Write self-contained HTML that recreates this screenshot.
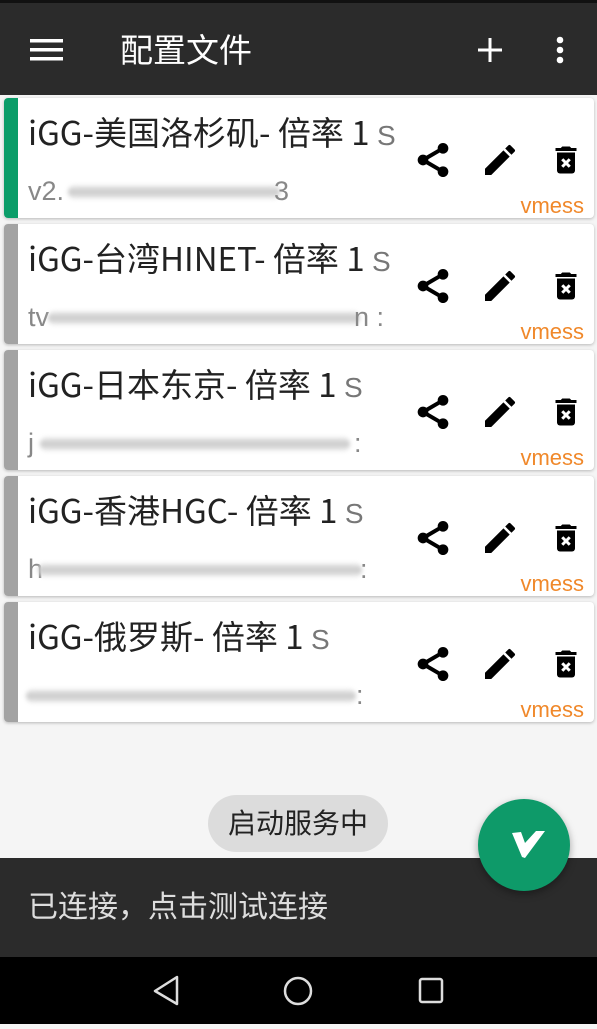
<!DOCTYPE html>
<html><head><meta charset="utf-8"><style>
*{margin:0;padding:0;box-sizing:border-box}
body{width:597px;height:1024px;background:#f5f5f5;position:relative;overflow:hidden;font-family:"Liberation Sans","Noto Sans CJK SC",sans-serif}
.top{position:absolute;left:0;top:0;width:597px;height:95px;background:#2b2b2b;border-top:3px solid #111}
.title{position:absolute;left:120px;top:29px;color:#fff;font-size:33px;line-height:38px}
.card{position:absolute;left:4px;width:590px;height:120px;background:#fff;border-radius:4px;box-shadow:0 1px 3px rgba(0,0,0,.25);overflow:hidden}
.bar{position:absolute;left:0;top:0;width:14px;height:100%;background:#a3a3a3}
.name{position:absolute;left:24px;top:13px;font-size:33px;line-height:40px;color:#222;white-space:nowrap;font-family:"Noto Sans CJK SC","Liberation Sans",sans-serif}
.name span{color:#777;font-size:28px;font-family:"Liberation Sans",sans-serif}
.addr{position:absolute;left:24px;top:77px;font-size:27px;line-height:32px;color:#888}
.blur{position:absolute;top:87px;height:14px;background:linear-gradient(#f0f0f0,#c8c8c8,#f0f0f0);border-radius:7px;filter:blur(2px)}
.vm{position:absolute;right:10px;top:95px;color:#f0882a;font-size:22px;line-height:26px}
.ic{position:absolute;top:42px}
</style></head><body>
<div class="top">
<svg style="position:absolute;left:30px;top:35px" width="33" height="24"><rect y="1" width="33" height="3.5" fill="#fff"/><rect y="10" width="33" height="3.5" fill="#fff"/><rect y="19" width="33" height="3.5" fill="#fff"/></svg>
<div class="title">配置文件</div>
<svg style="position:absolute;left:478px;top:35px" width="24" height="24"><rect x="10.5" width="3" height="24" fill="#fff"/><rect y="10.5" width="24" height="3" fill="#fff"/></svg>
<svg style="position:absolute;left:556px;top:33px" width="8" height="30"><circle cx="4" cy="4" r="3.3" fill="#fff"/><circle cx="4" cy="14" r="3.3" fill="#fff"/><circle cx="4" cy="24" r="3.3" fill="#fff"/></svg>
</div>

<svg width="0" height="0" style="position:absolute"><defs>
<g id="sh"><circle cx="18" cy="5" r="3.2"/><circle cx="6" cy="12" r="3.2"/><circle cx="18" cy="19" r="3.2"/><path d="M6 12L18 5M6 12L18 19" stroke="#000" stroke-width="2.4"/></g>
<g id="ed"><path d="M3 17.25V21h3.75L17.81 9.94l-3.75-3.75L3 17.25zM20.71 7.04a1 1 0 000-1.41l-2.34-2.34a1 1 0 00-1.41 0l-1.83 1.83 3.75 3.75 1.83-1.83z"/></g>
<g id="dl"><path d="M15.5 4l-1-1h-5l-1 1H5v2h14V4z"/><path d="M6 7h12v12a2 2 0 01-2 2H8a2 2 0 01-2-2z"/><path d="M9.5 11.5l5 5M14.5 11.5l-5 5" stroke="#fff" stroke-width="2"/></g>
</defs></svg>

<div class="card" style="top:98px"><div class="bar" style="background:#0b9d69"></div><div class="name">iGG-美国洛杉矶- 倍率 1 <span>S</span></div><div class="addr">v2.</div><div class="blur" style="left:64px;width:212px"></div><div class="addr" style="left:270px">3</div>
<svg class="ic" style="left:409px" width="40" height="40" viewBox="0 0 24 24"><use href="#sh"/></svg>
<svg class="ic" style="left:476px" width="40" height="40" viewBox="0 0 24 24"><use href="#ed"/></svg>
<svg class="ic" style="left:544px" width="36" height="40" viewBox="0 0 24 24"><use href="#dl"/></svg>
<div class="vm">vmess</div></div>

<div class="card" style="top:224px"><div class="bar"></div><div class="name">iGG-台湾HINET- 倍率 1 <span>S</span></div><div class="addr">tv</div><div class="blur" style="left:44px;width:312px"></div><div class="addr" style="left:350px">n :</div>
<svg class="ic" style="left:409px" width="40" height="40" viewBox="0 0 24 24"><use href="#sh"/></svg>
<svg class="ic" style="left:476px" width="40" height="40" viewBox="0 0 24 24"><use href="#ed"/></svg>
<svg class="ic" style="left:544px" width="36" height="40" viewBox="0 0 24 24"><use href="#dl"/></svg>
<div class="vm">vmess</div></div>

<div class="card" style="top:350px"><div class="bar"></div><div class="name">iGG-日本东京- 倍率 1 <span>S</span></div><div class="addr">j</div><div class="blur" style="left:36px;width:310px"></div><div class="addr" style="left:350px">:</div>
<svg class="ic" style="left:409px" width="40" height="40" viewBox="0 0 24 24"><use href="#sh"/></svg>
<svg class="ic" style="left:476px" width="40" height="40" viewBox="0 0 24 24"><use href="#ed"/></svg>
<svg class="ic" style="left:544px" width="36" height="40" viewBox="0 0 24 24"><use href="#dl"/></svg>
<div class="vm">vmess</div></div>

<div class="card" style="top:476px"><div class="bar"></div><div class="name">iGG-香港HGC- 倍率 1 <span>S</span></div><div class="addr">h</div><div class="blur" style="left:34px;width:324px"></div><div class="addr" style="left:356px">:</div>
<svg class="ic" style="left:409px" width="40" height="40" viewBox="0 0 24 24"><use href="#sh"/></svg>
<svg class="ic" style="left:476px" width="40" height="40" viewBox="0 0 24 24"><use href="#ed"/></svg>
<svg class="ic" style="left:544px" width="36" height="40" viewBox="0 0 24 24"><use href="#dl"/></svg>
<div class="vm">vmess</div></div>

<div class="card" style="top:602px"><div class="bar"></div><div class="name">iGG-俄罗斯- 倍率 1 <span>S</span></div><div class="blur" style="left:22px;width:330px"></div><div class="addr" style="left:352px">:</div>
<svg class="ic" style="left:409px" width="40" height="40" viewBox="0 0 24 24"><use href="#sh"/></svg>
<svg class="ic" style="left:476px" width="40" height="40" viewBox="0 0 24 24"><use href="#ed"/></svg>
<svg class="ic" style="left:544px" width="36" height="40" viewBox="0 0 24 24"><use href="#dl"/></svg>
<div class="vm">vmess</div></div>

<div style="position:absolute;left:208px;top:795px;width:180px;height:57px;border-radius:29px;background:#dcdcdc;color:#222;font-size:28px;line-height:57px;text-align:center">启动服务中</div>

<div style="position:absolute;left:0;top:858px;width:597px;height:99px;background:#2b2b2b;color:#ddd;font-size:30px;line-height:99px;padding-left:28px">已连接，点击测试连接</div>

<div style="position:absolute;left:478px;top:799px;width:92px;height:92px;border-radius:50%;background:#0e9a69;box-shadow:0 3px 8px rgba(0,0,0,.35)">
<svg width="92" height="92" viewBox="0 0 92 92"><path d="M34 34l9-1 4 11 11-12 9 0L47 59 44 58z" fill="#fff"/></svg></div>

<div style="position:absolute;left:0;top:957px;width:597px;height:67px;background:#000">
<svg width="597" height="67"><path d="M177 20L155 34L177 47Z" fill="none" stroke="#ddd" stroke-width="2.5" stroke-linejoin="round"/><circle cx="298" cy="34" r="13" fill="none" stroke="#ddd" stroke-width="2.5"/><rect x="420" y="22" width="22" height="23" rx="2" fill="none" stroke="#ddd" stroke-width="2.5"/></svg>
</div>
</body></html>
